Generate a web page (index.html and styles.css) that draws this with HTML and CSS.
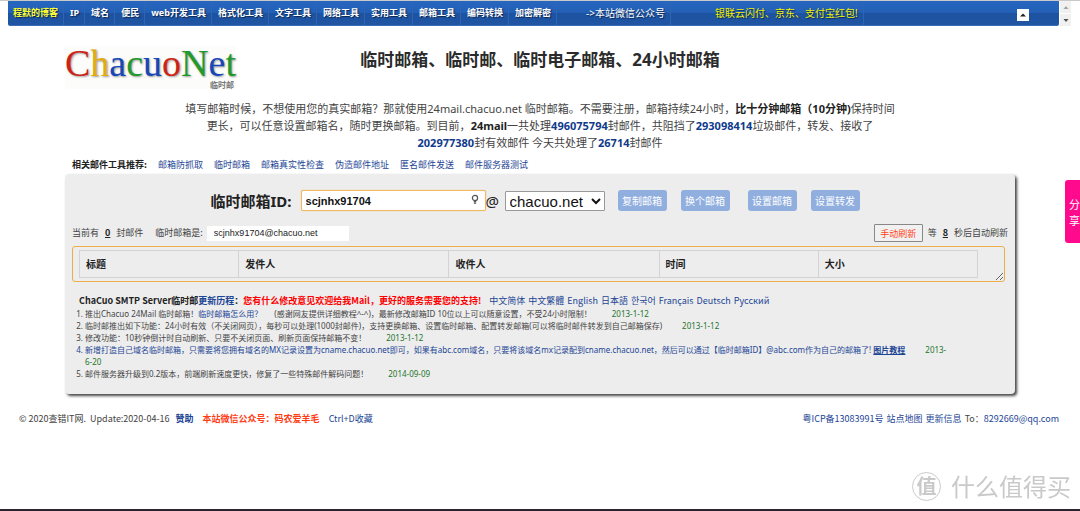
FILE: index.html
```html
<!DOCTYPE html>
<html lang="zh-CN">
<head>
<meta charset="utf-8">
<title>临时邮箱、临时邮、临时电子邮箱、24小时邮箱</title>
<link rel="stylesheet" href="styles.css">
</head>
<body>
<div class="topbar">
  <nav class="nav">
    <a class="nav-item nav-home" href="#">程默的博客</a>
    <a class="nav-item" href="#">IP</a>
    <a class="nav-item" href="#">域名</a>
    <a class="nav-item" href="#">便民</a>
    <a class="nav-item" href="#">web开发工具</a>
    <a class="nav-item" href="#">格式化工具</a>
    <a class="nav-item" href="#">文字工具</a>
    <a class="nav-item" href="#">网络工具</a>
    <a class="nav-item" href="#">实用工具</a>
    <a class="nav-item" href="#">邮箱工具</a>
    <a class="nav-item" href="#">编码转换</a>
    <a class="nav-item" href="#">加密解密</a>
    <a class="nav-item nav-wechat" href="#">-&gt;本站微信公众号</a>
    <a class="nav-item nav-promo" href="#">银联云闪付、京东、支付宝红包!</a>
    <button class="nav-toggle" type="button" aria-label="收起"><svg viewBox="0 0 12 12" width="12" height="12"><path d="M3 7.5 6 4.5 9 7.5z" fill="#222"/></svg></button>
  </nav>
  <div class="stepper">
    <button class="step" type="button" aria-label="向上"><svg viewBox="0 0 10 12" width="10" height="12"><path d="M2.500 8 5 5 7.500 8z" fill="#a3a3a3"/></svg></button>
    <button class="step" type="button" aria-label="向下"><svg viewBox="0 0 10 12" width="10" height="12"><path d="M2.500 5 5 8 7.500 5z" fill="#505050"/></svg></button>
  </div>
</div>

<header class="header">
  <a class="logo" href="#">
    <span class="logo-name"><span class="red">C</span><span class="gold">h</span><span class="blue">a</span><span class="green">c</span><span class="blue">u</span><span class="red">o</span><span class="green">N</span><span class="blue">e</span><span class="green">t</span></span>
    <span class="logo-sub">临时邮</span>
  </a>
  <h1 class="title">临时邮箱、临时邮、临时电子邮箱、24小时邮箱</h1>
</header>

<p class="intro">填写邮箱时候，不想使用您的真实邮箱？那就使用24mail.chacuo.net 临时邮箱。不需要注册，邮箱持续24小时，<b>比十分钟邮箱（10分钟)</b>保持时间<br>更长，可以任意设置邮箱名，随时更换邮箱。到目前，<b>24mail</b>一共处理<b class="num">496075794</b>封邮件，共阻挡了<b class="num">293098414</b>垃圾邮件，转发、接收了<br><b class="num">202977380</b>封有效邮件 今天共处理了<b class="num">26714</b>封邮件</p>

<div class="related">
  <b>相关邮件工具推荐:</b>
  <a href="#">邮箱防抓取</a>
  <a href="#">临时邮箱</a>
  <a href="#">邮箱真实性检查</a>
  <a href="#">伪造邮件地址</a>
  <a href="#">匿名邮件发送</a>
  <a href="#">邮件服务器测试</a>
</div>

<main class="panel">
  <form class="account">
    <label class="account-label" for="mail-id">临时邮箱ID:</label>
    <span class="id-field">
      <input class="id-input" id="mail-id" type="text" value="scjnhx91704">
      <svg class="key" viewBox="0 0 8 12" width="8" height="12"><circle cx="4" cy="4" r="2.600" fill="none" stroke="#555" stroke-width="1.200"/><path d="M4 6.500v3M2.800 7.500h2.400M2.800 9.200h2.400" stroke="#555" stroke-width="1" fill="none"/></svg>
    </span>
    <label class="at" for="domain">@</label>
    <select class="domain" id="domain"><option>chacuo.net</option></select>
    <div class="actions">
      <button class="action" type="button">复制邮箱</button>
      <button class="action" type="button">换个邮箱</button>
    </div>
    <div class="actions">
      <button class="action" type="button">设置邮箱</button>
      <button class="action" type="button">设置转发</button>
    </div>
  </form>

  <div class="status">
    <span>当前有</span><b class="count">0</b><span>封邮件</span>
    <label class="current-label" for="current">临时邮箱是:</label>
    <input class="current" id="current" type="text" value="scjnhx91704@chacuo.net" readonly>
    <button class="refresh" type="button">手动刷新</button>
    <span class="wait">等</span><b class="count">8</b><span>秒后自动刷新</span>
  </div>

  <div class="inbox">
    <table class="mails">
      <colgroup><col class="col-s"><col class="col-l"><col class="col-l"><col class="col-s"><col class="col-s"></colgroup>
      <thead><tr><th>标题</th><th>发件人</th><th>收件人</th><th>时间</th><th>大小</th></tr></thead>
    </table>
  </div>

  <section class="log">
    <div class="log-head">
      <span><b>ChaCuo SMTP Server临时邮<a href="#">更新历程</a>：<span class="notice">您有什么修改意见欢迎给我Mail，更好的服务需要您的支持!</span></b></span>
      <span class="langs"><a href="#">中文简体</a><a href="#">中文繁體</a><a href="#">English</a><a href="#">日本語</a><a href="#">한국어</a><a href="#">Français</a><a href="#">Deutsch</a><a href="#">Русский</a></span>
    </div>
    <ol class="log-list">
      <li>推出Chacuo 24Mail 临时邮箱！<a class="howto" href="#">临时邮箱怎么用？</a>(感谢网友提供详细教程^-^)，最新修改邮箱ID 10位以上可以随意设置，不受24小时限制！<span class="date">2013-1-12</span></li>
      <li>临时邮推出如下功能：24小时有效（不关闭网页），每秒可以处理(1000封邮件)，支持更换邮箱、设置临时邮箱、配置转发邮箱(可以将临时邮件转发到自己邮箱保存)<span class="date">2013-1-12</span></li>
      <li>修改功能：10秒钟倒计时自动刷新、只要不关闭页面、刷新页面保持邮箱不变！<span class="date">2013-1-12</span></li>
      <li class="feature">新增打造自己域名临时邮箱，只需要将您拥有域名的MX记录设置为cname.chacuo.net即可，如果有abc.com域名，只要将该域名mx记录配到cname.chacuo.net，然后可以通过【临时邮箱ID】@abc.com作为自己的邮箱了! <a class="guide" href="#">图片教程</a><span class="date">2013-<br>6-20</span></li>
      <li>邮件服务器升级到0.2版本，前端刷新速度更快，修复了一些特殊邮件解码问题！<span class="date">2014-09-09</span></li>
    </ol>
  </section>
</main>

<footer class="footer">
  <div class="foot-left">
    <span>© 2020查错IT网.&nbsp; Update:2020-04-16</span>
    <a class="sponsor" href="#">赞助</a>
    <a class="wechat" href="#">本站微信公众号：码农爱羊毛</a>
    <a href="#">Ctrl+D收藏</a>
  </div>
  <div class="foot-right">
    <a href="#">粤ICP备13083991号</a>
    <a href="#">站点地图</a>
    <a href="#">更新信息</a>
    <span>To：<a href="#">8292669@qq.com</a></span>
  </div>
</footer>

<a class="share" href="#">分享</a>
<div class="watermark"><span class="seal">值</span><span>什么值得买</span></div>
</body>
</html>
```
FILE: styles.css
```css
* { box-sizing: border-box; }

body {
  margin: 0;
  min-height: 100vh;
  border-top: 1px solid #c9c9c9;
  border-bottom: 2px solid #2b2430;
  background: #fff;
  color: #444;
  font: 9px/12px "Noto Sans CJK SC", "Noto Sans CJK KR", "Noto Sans", sans-serif;
}

a { color: #1c4595; text-decoration: none; }
button, input, select { font-family: inherit; margin: 0; }
b { color: #222; }

.nav, .title, .intro, .account, .mails, .log-list {
  font-family: "Noto Sans", "Noto Sans CJK SC", sans-serif;
}

.topbar { display: flex; gap: 1px; padding: 0 9px 0 8px; }

.nav {
  flex: 1;
  display: flex;
  height: 25px;
  border-radius: 0 0 2px 2px;
  border-bottom: 1px solid #3b6cb8;
  background: linear-gradient(#2766c0 0, #235fb5 49%, #1c529f 50%, #1f55a3 100%);
}
.nav-item {
  padding: 0 5px;
  border-right: 1px solid #2d65b5;
  color: #fff;
  font-size: 9px;
  font-weight: bold;
  line-height: 24px;
  text-shadow: 1px 1px 1px #0b2550;
  white-space: nowrap;
}
.nav-item + .nav-item { padding-left: 6px; }
.nav-item.nav-home { color: #ff3; }
.nav-item.nav-wechat { padding-left: 29px; font-size: 10px; font-weight: normal; }
.nav-item.nav-promo { padding-left: 44px; font-size: 10px; font-weight: normal; color: #f2f200; }
.nav-toggle {
  display: flex;
  align-self: center;
  margin: 3px 30px 0 auto;
  padding: 0;
  border: 0;
  background: #fff;
}

.stepper { display: flex; flex-direction: column; gap: 1px; width: 11px; }
.step { flex: 1; display: flex; justify-content: center; align-items: center; padding: 0; border: 0; background: #f0f0f0; }

.header {
  display: grid;
  grid-template-columns: 1fr auto 1fr;
  align-items: start;
  margin: 20px 65px 0;
}
.logo { display: flex; flex-direction: column; width: 171px; background: #fcfdfb; }
.logo-name {
  font-family: "Liberation Serif", serif;
  font-size: 38px;
  line-height: 34px;
  text-shadow: 1px 1px 2px #999;
}
.logo-sub { padding-right: 2px; color: #777; font-size: 8px; font-weight: bold; line-height: 9px; text-align: right; }
.red { color: #cc2414; }
.gold { color: #e0ac14; }
.blue { color: #1747b8; }
.green { color: #22992c; }
.title { margin: 0; color: #2b2b2b; font-size: 17px; line-height: 28px; white-space: nowrap; }

.intro { margin: 11px 65px 0; font-size: 11px; line-height: 17px; text-align: center; white-space: nowrap; }
.intro .num { color: #103a8c; }

.related { display: flex; gap: 11px; margin: 8px 72px 0; }

.panel {
  margin: 3px 65px 0;
  padding: 16px 7px 14px;
  border-radius: 4px;
  background: #ededed;
  box-shadow: 2px 2px 3px #444;
}

.account { display: flex; justify-content: center; align-items: center; padding-right: 10px; }
.account-label { margin-right: 9px; color: #222; font-size: 15px; font-weight: bold; line-height: 20px; }
.id-field { position: relative; display: flex; }
.id-input {
  width: 185px;
  height: 21px;
  padding: 0 4px;
  border: 1px solid #f3b862;
  border-radius: 2px;
  outline: 0;
  background: #fff;
  box-shadow: 0 0 1px #f0ad4e;
  color: #111;
  font: bold 11px "Liberation Sans", sans-serif;
}
.key { position: absolute; right: 7px; top: 4px; }
.at { width: 19px; color: #222; font-size: 15px; line-height: 20px; }
.domain {
  width: 100px;
  height: 20px;
  padding: 0;
  border: 1px solid #999;
  border-radius: 1px;
  background: #fff;
  color: #111;
  font: 15px "Liberation Sans", sans-serif;
}
.actions { display: flex; gap: 14px; margin-left: 13px; }
.actions + .actions { margin-left: 18px; }
.action {
  width: 49px;
  height: 21px;
  padding: 0;
  border: 0;
  border-radius: 3px;
  background: #90aede;
  color: #fff;
  font-size: 10px;
}

.status { display: flex; align-items: center; height: 18px; margin-top: 13px; }
.count { margin: 0 6px; text-decoration: underline; }
.current-label { margin-left: 12px; }
.current {
  width: 142px;
  height: 15px;
  margin-left: 4px;
  padding: 0 7px;
  border: 0;
  background: #fff;
  color: #222;
  font: 9px "Liberation Sans", sans-serif;
}
.refresh {
  width: 49px;
  height: 18px;
  margin: 0 5px 0 auto;
  padding: 0;
  border: 1px solid #888;
  border-radius: 1px;
  background: #f1f1f1;
  color: #ff4520;
  font-size: 9px;
}

.inbox {
  margin: 4px 3px 0 0;
  padding: 3px 26px 3px 6px;
  border: 1px solid #ecae4b;
  border-radius: 3px;
  overflow: hidden;
  resize: both;
}
.mails { width: 100%; border-collapse: collapse; table-layout: fixed; }
.mails th {
  height: 27px;
  padding: 0 6px;
  border: 1px solid #d3d3d3;
  color: #222;
  font-size: 10px;
  text-align: left;
}
.col-s { width: 159px; }
.col-l { width: 210px; }

.log { margin-top: 12px; }
.log-head { display: flex; gap: 8px; padding-left: 7px; line-height: 13px; white-space: nowrap; }
.log-head .notice { color: #f00; }
.langs { display: flex; gap: 3px; }
.log-list { margin: 1px 0 0; padding-left: 13px; font-size: 8px; }
.howto { margin-right: 12px; }
.date { margin-left: 20px; color: #24752c; }
.feature { color: #1c4595; }
.guide { font-weight: bold; text-decoration: underline; }

.footer { display: flex; justify-content: space-between; margin: 19px 21px 0 19px; }
.foot-left, .foot-right { display: flex; }
.foot-right { gap: 3px; }
.sponsor { margin: 0 9px 0 6px; font-weight: bold; }
.wechat { margin-right: 9px; color: #ff3c14; font-weight: bold; }

.share {
  position: fixed;
  top: 180px;
  right: 0;
  width: 15px;
  padding: 16px 0 15px 4px;
  border-radius: 3px 0 0 3px;
  background: #ff0a8c;
  color: #fff;
  font-size: 11px;
  line-height: 16px;
  overflow: hidden;
}

.watermark {
  position: fixed;
  right: 9px;
  bottom: 8px;
  display: flex;
  align-items: center;
  gap: 10px;
  color: #c9c9c9;
  font-size: 24px;
  line-height: 34px;
}
.seal {
  width: 29px;
  height: 29px;
  border: 1px solid #c9c9c9;
  border-radius: 50%;
  font-size: 20px;
  font-weight: bold;
  line-height: 26px;
  text-align: center;
}
```
